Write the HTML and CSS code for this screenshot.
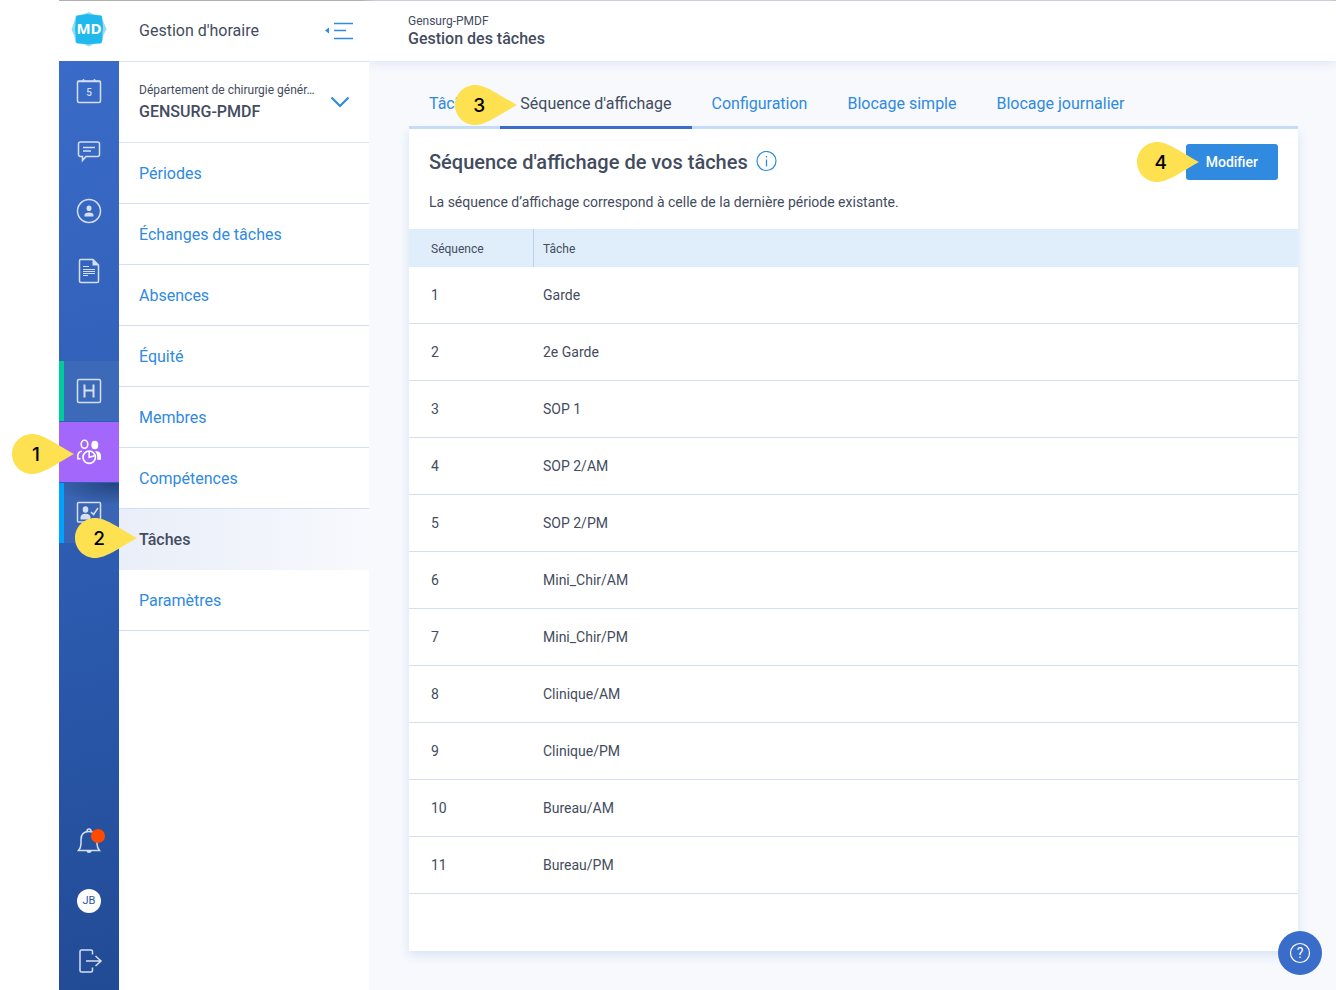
FILE: index.html
```html
<!DOCTYPE html>
<html lang="fr">
<head>
<meta charset="utf-8">
<meta name="viewport" content="width=device-width, initial-scale=1">
<title>Gestion des tâches</title>
<link rel="stylesheet" href="styles.css">
</head>
<body>
<svg class="sprite" aria-hidden="true">
  <symbol id="pin" viewBox="0 0 62 40"><path d="M20 0C9 0 0 9 0 20s9 20 20 20c11 0 22-9 42-20C42 9 31 0 20 0z" fill="#fde151"/></symbol>
</svg>
<div class="app">
  <div class="rail-column">
    <a class="logo" href="#" aria-label="Accueil">
      <svg width="36" height="36" viewBox="0 0 36 36">
        <path d="M5 4.500l7-1 6-2.500 5 2.500 7.500 1 1.500 5.500 3.500 8-3 6-1 6-7 2-6.500 3.500-7-3-6.500-1-1-6-3-7 2.500-7z" fill="#8fdcf6"/>
        <path d="M5 6.500q0-2 2-2l9-1.500q2 0 4 .5l9 1q2 0 2 2l1 10q0 2-.5 4l-.5 10q0 2-2 2l-10 .5q-2 .5-4 0l-8-.5q-2 0-2-2l-.5-9q-.5-2-.5-4z" fill="#20b9ee"/>
        <text class="logo-text" x="18" y="23" text-anchor="middle">MD</text>
      </svg>
    </a>
    <nav class="rail" aria-label="Modules">
      <a class="rail-item" href="#" aria-label="Calendrier">
        <svg width="26" height="26" viewBox="0 0 26 26"><rect x="1.500" y="3" width="23" height="21.500" rx="1.500"/><path d="M1.500 3.500h23M7.500 1v3M18.500 1v3"/><text class="day" x="13" y="18" text-anchor="middle">5</text></svg>
      </a>
      <a class="rail-item" href="#" aria-label="Messages">
        <svg width="26" height="26" viewBox="0 0 26 26"><path d="M4.500 4h17q2 0 2 2v10.500q0 2-2 2H10l-3.500 4v-4h-2q-2 0-2-2V6q0-2 2-2zM7 9.500h12M7 13h8"/></svg>
      </a>
      <a class="rail-item" href="#" aria-label="Profil">
        <svg width="26" height="26" viewBox="0 0 26 26"><circle cx="13" cy="13" r="11.500"/><path class="solid" d="M13 7.500a2.500 2.800 0 1 1 0 5.600a2.500 2.800 0 1 1 0-5.600zM8.500 18.500v-1.500q0-2.500 4.500-2.500t4.500 2.500v1.500z"/></svg>
      </a>
      <a class="rail-item" href="#" aria-label="Documents">
        <svg width="26" height="26" viewBox="0 0 26 26"><path d="M4.500 1.500H17l5.500 5.500v16q0 1.500-1.500 1.500H5q-1.500 0-1.500-1.500V3q0-1.500 1-1.500z"/><path class="solid" d="M16.500 1.500v6h6z"/><path class="thin" d="M7 8.500h6M7 11.500h12M7 13.500h12M7 15.500h12M7 17.500h5"/></svg>
      </a>
      <a class="rail-item rail-green" href="#" aria-label="Horaires">
        <svg width="26" height="26" viewBox="0 0 26 26"><rect x="1.500" y="1.500" width="23" height="23" rx="1.500"/><path class="bold" d="M8.500 6.500v13M17.500 6.500v13M8.500 12.500h9"/></svg>
      </a>
      <div class="rail-current">
        <a class="rail-item rail-purple" href="#" aria-label="Gestion d'horaire">
          <svg width="26" height="26" viewBox="0 0 26 26"><ellipse cx="8.500" cy="5.300" rx="3.300" ry="4"/><ellipse class="solid" cx="18.800" cy="6" rx="3.500" ry="4.200"/><path d="M6 12.200Q2 12.500 1.800 17v2.700h2.700"/><path class="solid" d="M19 12.200h2.500q3.500 1 3.500 5v3.500h-3.800q.8-5-2.200-8.500z"/><circle cx="13.200" cy="18.200" r="6.200"/><path d="M13.200 12.500v5.700l5.500-1.500"/></svg>
        </a>
        <span class="pin pin-1"><svg class="pin-shape" width="62" height="40"><use href="#pin"/></svg><span class="pin-number">1</span></span>
      </div>
      <a class="rail-item rail-blue" href="#" aria-label="Présences">
        <svg width="26" height="26" viewBox="0 0 26 26"><rect x="1.500" y="2.500" width="23" height="19.500" rx="1"/><ellipse class="solid" cx="9.500" cy="9.500" rx="2.800" ry="3.200"/><path class="solid" d="M4.500 19.500v-2q0-3.800 5-3.800t5 3.800v2z"/><path d="M15 12l2.500 2.500L22 8"/></svg>
      </a>
      <div class="rail-footer">
        <button class="rail-item" type="button" aria-label="Notifications">
          <svg width="32" height="32" viewBox="0 0 32 32"><path d="M5.500 25.500h21q-2.500-3-2.500-7v-4q0-8-8-8t-8 8v4q0 4-2.500 7zM14 6q0-2 2-2t2 2"/><path class="solid" d="M13 25.500h6q-1 2.500-3 2.500t-3-2.500z"/><circle cx="25" cy="11" r="7" class="alert"/></svg>
        </button>
        <button class="rail-item" type="button" aria-label="Compte JB"><span class="avatar">JB</span></button>
        <a class="rail-item" href="#" aria-label="Déconnexion">
          <svg width="28" height="26" viewBox="0 0 28 26"><path d="M17.500 6.500v-3q0-1.500-1.500-1.500H6.500Q5 2 5 3.500v19Q5 24 6.500 24H16q1.500 0 1.500-1.500v-3M11 13h15M20.500 8l5.500 5-5.500 5"/></svg>
        </a>
      </div>
    </nav>
  </div>

  <aside class="sidebar">
    <div class="sidebar-head">
      <span>Gestion d'horaire</span>
      <button class="plain" type="button" aria-label="Réduire le menu">
        <svg width="30" height="20" viewBox="0 0 30 20"><path d="M10 2.500h19M10 9.500h12M10 17.500h19" stroke="#2f8ae0" stroke-width="1.500"/><path d="M5 6.500v6L1 9.500z" fill="#2f8ae0"/></svg>
      </button>
    </div>
    <button class="department" type="button">
      <span class="department-text"><span class="department-name">Département de chirurgie génér…</span><strong class="department-code">GENSURG-PMDF</strong></span>
      <svg width="20" height="12" viewBox="0 0 20 12"><path d="M1.500 1.500L10 10l8.500-8.500" fill="none" stroke="#2f8ae0" stroke-width="2.200"/></svg>
    </button>
    <nav class="menu" aria-label="Gestion d'horaire">
      <a class="menu-link" href="#">Périodes</a>
      <a class="menu-link" href="#">Échanges de tâches</a>
      <a class="menu-link" href="#">Absences</a>
      <a class="menu-link" href="#">Équité</a>
      <a class="menu-link" href="#">Membres</a>
      <a class="menu-link" href="#">Compétences</a>
      <div class="menu-current">
        <a class="menu-link menu-active" href="#" aria-current="page">Tâches</a>
        <span class="pin pin-2"><svg class="pin-shape" width="62" height="40"><use href="#pin"/></svg><span class="pin-number">2</span></span>
      </div>
      <a class="menu-link" href="#">Paramètres</a>
    </nav>
  </aside>

  <main class="main">
    <header class="topbar">
      <div class="crumb">Gensurg-PMDF</div>
      <h1 class="page-title">Gestion des tâches</h1>
    </header>
    <div class="content">
      <nav class="tabs" aria-label="Sections">
        <a class="tab" href="#">Tâches</a>
        <div class="tab-current">
          <a class="tab tab-active" href="#" aria-current="page">Séquence d'affichage</a>
          <span class="pin pin-3"><svg class="pin-shape" width="62" height="40"><use href="#pin"/></svg><span class="pin-number">3</span></span>
        </div>
        <a class="tab" href="#">Configuration</a>
        <a class="tab" href="#">Blocage simple</a>
        <a class="tab" href="#">Blocage journalier</a>
      </nav>
      <section class="card">
        <div class="card-head">
          <h2 class="card-title">Séquence d'affichage de vos tâches</h2>
          <button class="plain" type="button" aria-label="Information">
            <svg width="22" height="22" viewBox="0 0 22 22"><circle cx="10.500" cy="10" r="9.500" fill="none" stroke="#2f8ae0" stroke-width="1.200"/><path d="M10.500 8.500v7M10.500 5v1.500" stroke="#2f8ae0" stroke-width="1.300"/></svg>
          </button>
          <div class="action">
            <button class="edit" type="button">Modifier</button>
            <span class="pin pin-4"><svg class="pin-shape" width="62" height="40"><use href="#pin"/></svg><span class="pin-number">4</span></span>
          </div>
        </div>
        <p class="note">La séquence d’affichage correspond à celle de la dernière période existante.</p>
        <table class="tasks">
          <thead><tr><th class="col-seq" scope="col">Séquence</th><th scope="col">Tâche</th></tr></thead>
          <tbody>
            <tr><td>1</td><td>Garde</td></tr>
            <tr><td>2</td><td>2e Garde</td></tr>
            <tr><td>3</td><td>SOP 1</td></tr>
            <tr><td>4</td><td>SOP 2/AM</td></tr>
            <tr><td>5</td><td>SOP 2/PM</td></tr>
            <tr><td>6</td><td>Mini_Chir/AM</td></tr>
            <tr><td>7</td><td>Mini_Chir/PM</td></tr>
            <tr><td>8</td><td>Clinique/AM</td></tr>
            <tr><td>9</td><td>Clinique/PM</td></tr>
            <tr><td>10</td><td>Bureau/AM</td></tr>
            <tr><td>11</td><td>Bureau/PM</td></tr>
          </tbody>
        </table>
      </section>
    </div>
  </main>
</div>
<button class="help" type="button" aria-label="Aide">
  <svg width="22" height="22" viewBox="0 0 22 22"><circle cx="11" cy="11" r="9.500" fill="none" stroke="#fff" stroke-width="1.200"/><text class="help-mark" x="11" y="16" text-anchor="middle">?</text></svg>
</button>
</body>
</html>
```
FILE: styles.css
```css
* {
  box-sizing: border-box;
}

body {
  margin: 0;
  background: #fff;
  color: #434c5e;
  font-family: Roboto, "Liberation Sans", sans-serif;
  font-size: 16px;
  line-height: 20px;
}

a {
  color: inherit;
  text-decoration: none;
}

button {
  padding: 0;
  border: 0;
  background: none;
  color: inherit;
  font: inherit;
  cursor: pointer;
}

svg {
  display: block;
  flex: none;
}

.sprite {
  position: absolute;
  width: 0;
  height: 0;
}

.app {
  display: grid;
  grid-template-columns: 60px 250px minmax(0, 1fr);
  min-height: 100vh;
  margin-left: 59px;
  border-top: 1px solid #b0b0b0;
}

/* Module rail */
.rail-column {
  display: flex;
  flex-direction: column;
}

.logo {
  display: flex;
  align-items: center;
  justify-content: center;
  height: 60px;
  padding-bottom: 4px;
}

.logo-text {
  fill: #fff;
  font: 700 15px "Open Sans", sans-serif;
}

.rail {
  display: flex;
  flex: 1;
  flex-direction: column;
  background: linear-gradient(165deg, #3a6bc8, #2c5bb0 55%, #224b95);
}

.rail-item {
  display: flex;
  align-items: center;
  justify-content: center;
  width: 60px;
  height: 60px;
}

.rail-item svg {
  fill: none;
  stroke: #d5dff2;
  stroke-width: 1.500;
}

.rail-item .thin {
  stroke-width: 1;
}

.rail-item .bold {
  stroke-width: 2;
}

.rail-item .solid {
  fill: #d5dff2;
  stroke: none;
}

.rail-item .alert {
  fill: #ff4a00;
  stroke: none;
}

.day {
  fill: #d5dff2;
  stroke: none;
  font: 500 10px Roboto, sans-serif;
}

.rail-green {
  margin-top: 60px;
  background: linear-gradient(90deg, #00cc99 5px, #3d69b9 5px);
}

.rail-current {
  position: relative;
  z-index: 2;
  margin: 1px 0;
}

.rail-purple {
  background: #a368fb;
}

.rail-item.rail-purple svg {
  stroke: #fff;
  stroke-width: 1.600;
}

.rail-item.rail-purple .solid {
  fill: #fff;
}

.rail-blue {
  background:
    radial-gradient(ellipse 60px 22px at 50px 0, #24457f, #24457f00) 5px 0 no-repeat,
    linear-gradient(90deg, #00a2ff 5px, #3a65b4 5px);
}

.rail-footer {
  margin-top: auto;
}

.rail-footer .rail-item {
  padding-top: 2px;
}

.avatar {
  display: grid;
  place-items: center;
  width: 24px;
  height: 24px;
  border-radius: 50%;
  background: #fff;
  color: #2a559f;
  font-size: 11px;
}

/* Section menu */
.sidebar {
  position: relative;
  z-index: 1;
  background: #fff;
}

.sidebar-head {
  display: flex;
  align-items: center;
  justify-content: space-between;
  height: 61px;
  padding: 0 15px 0 20px;
  border-bottom: 1px solid #dae4f6;
}

.department {
  display: flex;
  align-items: center;
  justify-content: space-between;
  gap: 12px;
  width: 100%;
  height: 81px;
  padding: 0 19px 0 20px;
  border-bottom: 1px solid #dae4f6;
  text-align: left;
}

.department-name {
  display: block;
  font-size: 12px;
  white-space: nowrap;
}

.department-code {
  display: block;
  font-weight: 500;
  line-height: 24px;
}

.menu-link {
  display: flex;
  align-items: center;
  height: 61px;
  padding: 2px 20px 0;
  border-bottom: 1px solid #d5dff3;
  color: #2f8ae0;
}

.menu-current {
  position: relative;
}

.menu-active {
  border-color: transparent;
  background: linear-gradient(90deg, #e9eef8, #f7f9fd) border-box;
  color: #434c5e;
  font-weight: 500;
}

/* Page */
.main {
  background: #f7f9fd;
  box-shadow: 0 0 8px #dfe6f5;
}

.topbar {
  height: 60px;
  padding: 10px 39px;
  background: #fff;
  box-shadow: 0 2px 10px #dce4f5;
}

.crumb {
  font-size: 12px;
}

.page-title {
  margin: 0;
  font-size: 16px;
  font-weight: 500;
  line-height: 16px;
}

.content {
  padding: 20px 38px 39px 40px;
}

.tabs {
  display: flex;
  border-bottom: 3px solid #c3dbf7;
}

.tab {
  display: block;
  height: 48px;
  margin-bottom: -3px;
  padding: 13px 20px 0;
  color: #2f8ae0;
}

.tab-current {
  position: relative;
}

.tab-active {
  border-bottom: 3px solid #3a6cc9;
  color: #434c5e;
}

.card {
  padding: 15px 0 57px;
  background: #fff;
  box-shadow: 0 4px 10px #d7e2f5;
}

.card-head {
  display: flex;
  align-items: center;
  gap: 8px;
  padding: 0 20px;
}

.card-title {
  margin: 0;
  font-size: 20px;
  font-weight: 500;
}

.action {
  position: relative;
  margin-left: auto;
}

.edit {
  display: block;
  height: 36px;
  padding: 0 20px;
  border-radius: 3px;
  background: #2f8ae0;
  color: #fff;
  font-size: 14px;
  font-weight: 500;
}

.note {
  margin: 0;
  padding: 12px 20px 17px;
  font-size: 14px;
}

.tasks {
  width: 100%;
  border-collapse: separate;
  border-spacing: 0;
  font-size: 14px;
  table-layout: fixed;
  text-align: left;
}

.tasks th {
  height: 38px;
  padding: 2px 9px 0;
  background: #e0eefb;
  font-size: 12px;
  font-weight: 400;
}

.tasks .col-seq {
  width: 125px;
  padding-left: 22px;
  border-right: 1px solid #b9d3ef;
}

.tasks td {
  height: 57px;
  padding: 0 9px;
  border-bottom: 1px solid #d5dff3;
}

.tasks td:first-child {
  padding-left: 22px;
}

/* Numbered callouts */
.pin {
  position: absolute;
  z-index: 3;
  width: 62px;
  height: 40px;
  color: #000;
  pointer-events: none;
}

.pin-number {
  position: absolute;
  top: 0;
  left: 4px;
  width: 40px;
  font: 500 19px/42px Inter, sans-serif;
  text-align: center;
}

.pin-1 {
  top: 12px;
  left: -47px;
}

.pin-2 {
  top: 9px;
  left: -44px;
}

.pin-3 {
  top: 4px;
  left: -45px;
}

.pin-4 {
  top: -2px;
  left: -49px;
}

.help {
  position: fixed;
  right: 14px;
  bottom: 15px;
  z-index: 4;
  display: grid;
  place-items: center;
  width: 44px;
  height: 44px;
  border-radius: 50%;
  background: #3a6cc9;
}

.help-mark {
  fill: #fff;
  font: 400 14px Roboto, sans-serif;
}
```
